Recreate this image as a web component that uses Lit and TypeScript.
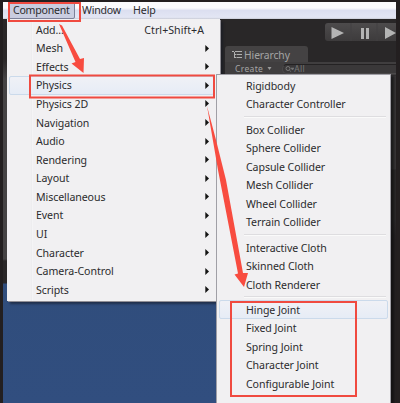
import { LitElement, html, css, svg } from "lit";
import { customElement, property } from "lit/decorators.js";
import { classMap } from "lit/directives/class-map.js";

interface Entry {
  label: string;
  shortcut?: string;
  sub?: boolean;
  active?: boolean;
}

const COMPONENT_MENU: Entry[] = [
  { label: "Add...", shortcut: "Ctrl+Shift+A" },
  { label: "Mesh", sub: true },
  { label: "Effects", sub: true },
  { label: "Physics", sub: true, active: true },
  { label: "Physics 2D", sub: true },
  { label: "Navigation", sub: true },
  { label: "Audio", sub: true },
  { label: "Rendering", sub: true },
  { label: "Layout", sub: true },
  { label: "Miscellaneous", sub: true },
  { label: "Event", sub: true },
  { label: "UI", sub: true },
  { label: "Character", sub: true },
  { label: "Camera-Control", sub: true },
  { label: "Scripts", sub: true },
];

const PHYSICS_MENU: Entry[][] = [
  [{ label: "Rigidbody" }, { label: "Character Controller" }],
  [
    { label: "Box Collider" },
    { label: "Sphere Collider" },
    { label: "Capsule Collider" },
    { label: "Mesh Collider" },
    { label: "Wheel Collider" },
    { label: "Terrain Collider" },
  ],
  [{ label: "Interactive Cloth" }, { label: "Skinned Cloth" }, { label: "Cloth Renderer" }],
  [
    { label: "Hinge Joint", active: true },
    { label: "Fixed Joint" },
    { label: "Spring Joint" },
    { label: "Character Joint" },
    { label: "Configurable Joint" },
  ],
];

@customElement("menu-panel")
export class MenuPanel extends LitElement {
  @property({ attribute: false }) groups: Entry[][] = [];

  static styles = css`
    :host {
      display: block;
      box-sizing: border-box;
      background: #f1f0f2;
    }
    .row {
      display: flex;
      align-items: center;
      justify-content: space-between;
      box-sizing: border-box;
      height: 18.58px;
      margin: 0 2px;
      padding: 0 4px 0 26px;
      border: 1px solid transparent;
      border-radius: 2px;
      white-space: nowrap;
    }
    .row.active {
      background: linear-gradient(#f0f1f6, #e6ecf6);
      border-color: #cbdaeb;
    }
    .shortcut {
      margin-right: 5px;
      letter-spacing: 0.05px;
    }
    .rule {
      height: 2px;
      margin: 2px 4px 2.5px 27px;
      background: #dedde0;
      border-bottom: 1px solid #fafafa;
      box-sizing: border-box;
    }
    .arrow {
      width: 4px;
      height: 7px;
      fill: #141414;
    }
  `;

  render() {
    return this.groups.map(
      (group, i) => html`
        ${i ? html`<div class="rule"></div>` : ""}
        ${group.map(
          (e) => html`<div class=${classMap({ row: true, active: !!e.active })}>
            <span>${e.label}</span>
            ${e.shortcut ? html`<span class="shortcut">${e.shortcut}</span>` : ""}
            ${e.sub ? html`<svg class="arrow" viewBox="0 0 4 7"><path d="M0.3 0L4 3.5L0.3 7Z" /></svg>` : ""}
          </div>`
        )}
      `
    );
  }
}

@customElement("app-root")
export class AppRoot extends LitElement {
  static styles = css`
    :host {
      display: block;
      position: relative;
      width: 400px;
      height: 403px;
      overflow: hidden;
      background: #231f20;
      font: 10.6px/16px "Noto Sans", "Open Sans", sans-serif;
      letter-spacing: -0.08px;
      color: #2b2b2d;
    }
    .window {
      box-sizing: border-box;
      height: 403px;
      margin: 0 4px 0 3px;
      padding-top: 2px;
    }
    .menubar {
      display: flex;
      box-sizing: border-box;
      height: 17px;
      background: linear-gradient(#fbfbfd 0 35%, #dcdff0 50%, #e3e6f4 90%, #c9cbd6);
    }
    .menubar span {
      box-sizing: border-box;
      height: 17px;
    }
    .menubar .open {
      width: 67px;
      margin-left: 5px;
      padding-left: 4px;
      border: 1px solid #7c8199;
      border-radius: 2px;
      background: #c9cde0;
      line-height: 15px;
      letter-spacing: -0.25px;
    }
    .menubar .second {
      margin-left: 7px;
      width: 51px;
      letter-spacing: -0.2px;
    }
    .stage {
      display: grid;
      grid-template-columns: 213px 1fr;
      height: 384px;
    }
    .scene {
      background: linear-gradient(#2a2728 0 40px, #454344 60px 240px, #2a2728 242px 264px, #304d7c 265px, #314e7f 100%);
    }
    .hierarchy {
      padding: 4px 0 0 9px;
      width: 180px;
      box-sizing: border-box;
      background: linear-gradient(#292728 0 56px, #383637 57px 150px, #2b292a 151px 200px, #242122 220px);
      color: #a5a5a5;
      overflow: hidden;
    }
    .tools {
      display: block;
      margin-left: 100px;
      width: 71px;
      height: 18px;
      border-radius: 3px 0 0 3px;
      background: linear-gradient(#4d4b4c, #3d3b3c);
    }
    .tab {
      display: flex;
      align-items: center;
      gap: 2px;
      width: 83px;
      height: 16px;
      margin-top: 5px;
      box-sizing: border-box;
      padding: 1px 0 0 7px;
      border-radius: 3px 3px 0 0;
      background: #444243;
      font-size: 10.3px;
    }
    .create {
      display: flex;
      align-items: center;
      height: 13px;
      padding-left: 10px;
      background: #403e3f;
      font-size: 8.5px;
      letter-spacing: 0.35px;
    }
    .search {
      display: flex;
      align-items: center;
      flex: 1;
      margin-left: 10px;
      height: 10px;
      border-radius: 5px 0 0 5px;
      background: #3a3839;
      border: 1px solid #4b494a;
      border-top-color: #242223;
      border-right: 0;
      box-sizing: border-box;
      color: #777;
      font-size: 8.5px;
      padding-left: 2px;
    }
    .caret { margin-left: 4px; }
    .main {
      position: absolute;
      left: 7px;
      top: 19px;
      width: 213px;
      height: 282px;
      padding: 1.4px 4px 0 0;
      background: linear-gradient(90deg, #f1f0f2 24px, #e3e2e5 24px, #f8f8f9 25px, #f1f0f2 26px);
      box-shadow: 1px 1px 0 #918f96, 3px 3px 2px rgba(20, 24, 36, 0.55);
    }
    .sub {
      position: absolute;
      left: 216px;
      top: 74px;
      width: 175px;
      height: 329px;
      padding: 1.6px 0 0 0;
      border: solid #a09fa6;
      border-width: 1px 1px 0 1px;
      box-shadow: 3px 2px 2px rgba(10, 10, 12, 0.6);
    }
    .marks {
      position: absolute;
      inset: 0;
      width: 400px;
      height: 403px;
      fill: none;
      stroke: #f04a40;
      stroke-width: 2;
    }
    .fill { fill: #f84c40; stroke: none; }
  `;

  render() {
    return html`
      <div class="window">
        <div class="menubar">
          <span class="open">Component</span>
          <span class="second">Window</span>
          <span>Help</span>
        </div>
        <div class="stage">
          <div class="scene"></div>
          <div class="hierarchy">
            <svg class="tools" viewBox="0 0 71 18">
              <path d="M26 0V18M52 0V18" stroke="#434142" />
              <path d="M6.500 4L19 10L6.500 16ZM36 5h3v11h-3ZM41 5h3v11h-3ZM60 4L71 10L60 16Z" fill="#b4b4b4" />
            </svg>
            <div class="tab">
              <svg width="10" height="9" viewBox="0 0 10 9">
                <path d="M0 1.500H2M3 1.500H10M4.500 4.500H10M4.500 7.500H10M2.500 2V8M2.500 4.500H4M2.500 7.500H4" stroke="#b0b0b0" />
              </svg>
              <span>Hierarchy</span>
            </div>
            <div class="create">
              <span>Create</span>
              <svg class="caret" width="5" height="3"><path d="M0.5 0H4.5L2.5 3Z" fill="#999" /></svg>
              <div class="search">
                <svg width="9" height="8" viewBox="0 0 9 8">
                  <circle cx="3" cy="3.5" r="2" fill="none" stroke="#777" />
                  <path d="M4.5 5L6 7M6 3H9L7.5 5Z" stroke="#777" stroke-width=".6" fill="#777" />
                </svg>
                <span>All</span>
              </div>
            </div>
          </div>
        </div>
      </div>
      <menu-panel class="main" .groups=${[COMPONENT_MENU]}></menu-panel>
      <menu-panel class="sub" .groups=${PHYSICS_MENU}></menu-panel>
      <svg class="marks" viewBox="0 0 400 403">
        ${svg`
          <rect x="9" y="3" width="71" height="18" />
          <rect x="30" y="75.5" width="184" height="22" />
          <rect x="231" y="302" width="125" height="94" />
          <path class="fill" d="M59 24L62 25.500L80 59L84 58L83.500 73L71.500 63.500L75.500 62Z" />
          <path class="fill" d="M207 106L216 140L226 180L243 273L248 273L244 287L234.500 274.500L238 273.500L218 170Z" />
        `}
      </svg>
    `;
  }
}
